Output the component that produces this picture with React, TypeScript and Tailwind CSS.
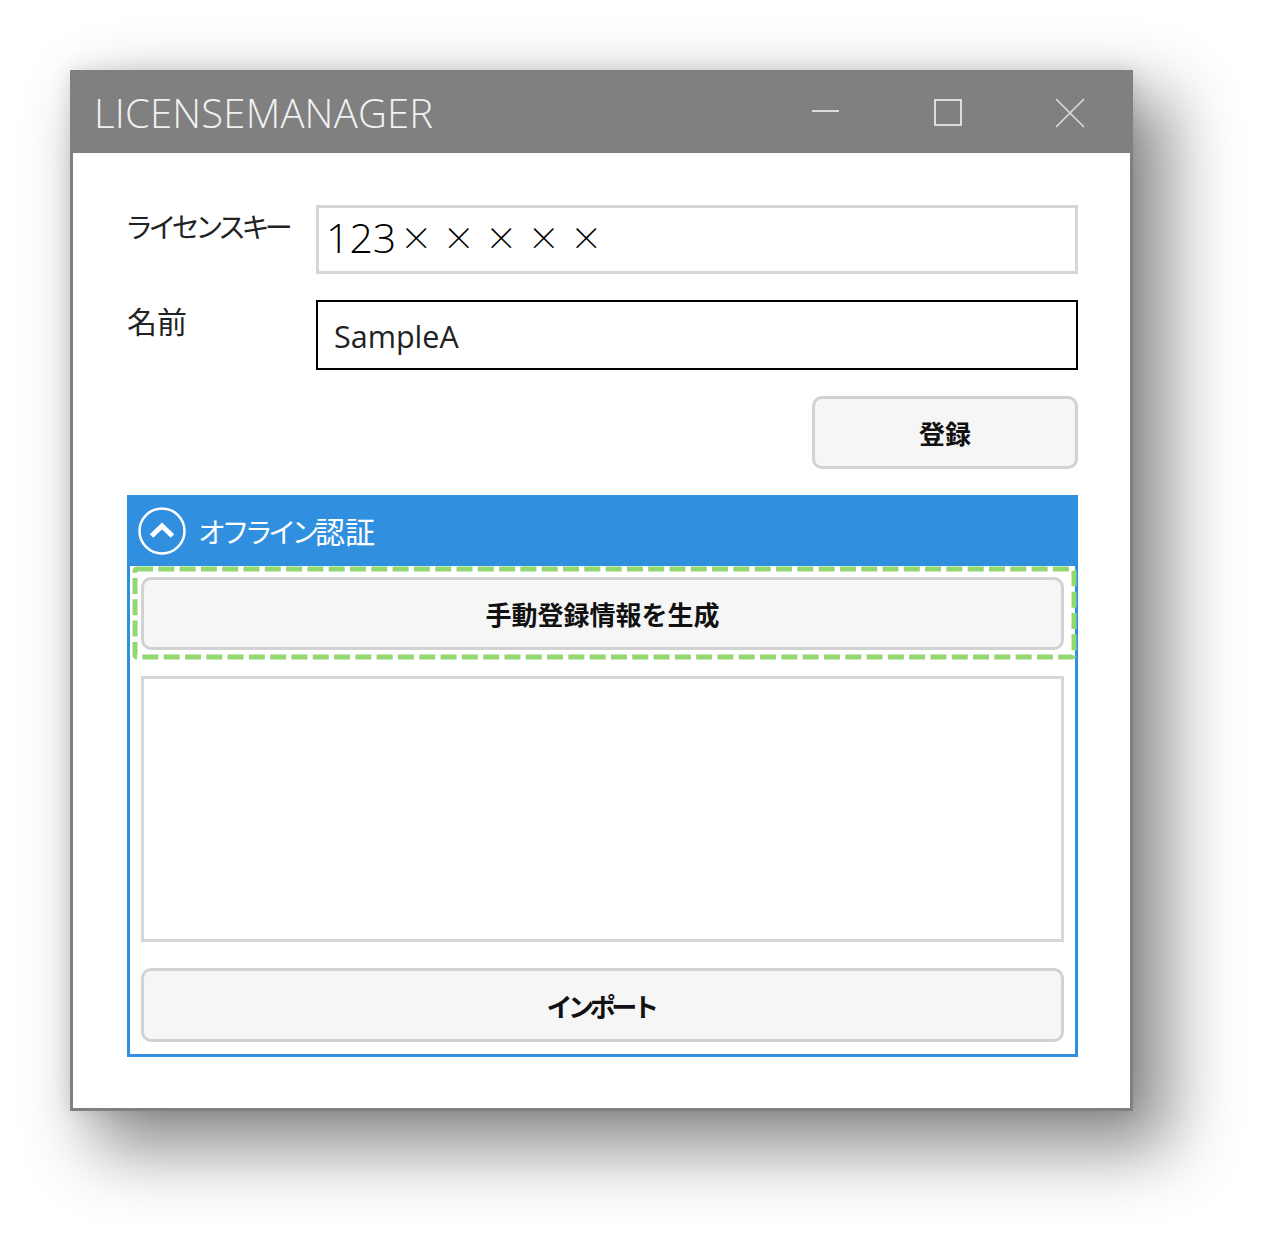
import React from "react";

const jp = "font-['Open_Sans','Noto_Sans_CJK_JP',sans-serif]";
const jpOnly = "font-['Noto_Sans_CJK_JP',sans-serif]";

const GrayButton = ({ children, className }: { children: React.ReactNode; className: string }) => (
  <button
    className={`flex items-center justify-center rounded-[10px] border-[3px] border-[#d2d2d2] bg-[#f6f6f6] text-[26px] font-bold text-[#111] ${jpOnly} ${className}`}
  >
    {children}
  </button>
);

const App = () => {
  return (
    <div className="h-[1254px] w-[1275px] overflow-hidden bg-white pl-[70px] pt-[70px]">
      <div className="flex h-[1041px] w-[1063px] flex-col border-x-[3px] border-b-[3px] border-[#808080] bg-white shadow-[30px_32px_65px_6px_rgba(0,0,0,0.46),0_0_20px_rgba(0,0,0,0.12)]">
        <div className="-mx-[3px] flex h-[83px] shrink-0 items-center bg-[#808080] pl-[24px] pt-[3px] text-[#f2f2f2]">
          <span className="font-['Open_Sans',sans-serif] text-[40px] font-light leading-none tracking-[0.2px]">
            LICENSEMANAGER
          </span>
          <div className="ml-auto flex items-center pr-[48px]">
            <svg width="28" height="30" viewBox="0 0 28 30" className="mr-[94px]">
              <path d="M0 13h27" stroke="#dcdcdc" strokeWidth="2" />
            </svg>
            <svg width="28" height="30" viewBox="0 0 28 30" className="mr-[93px]">
              <rect x="1" y="2" width="26" height="25" fill="none" stroke="#dcdcdc" strokeWidth="2" />
            </svg>
            <svg width="30" height="30" viewBox="0 0 30 30">
              <path d="M1 1l28 28M29 1L1 29" stroke="#dcdcdc" strokeWidth="1.6" />
            </svg>
          </div>
        </div>

        <div className="flex flex-col pl-[54px] pr-[52px] pt-[52px]">
          <div className="flex items-start">
            <span className={`-ml-[2px] mt-[1px] w-[191px] whitespace-nowrap text-[28px] leading-[40px] tracking-[-4.6px] text-[#222] ${jpOnly}`}>
              ライセンスキー
            </span>
            <div className={`flex h-[69px] flex-1 items-center border-[3px] border-[#d6d6d6] pb-[3px] pl-[7px] text-[41px] font-light text-black ${jp}`}>
              123
              <span className={`mb-[4px] ml-[4px] text-[32px] tracking-[10.5px] ${jpOnly}`}>×××××</span>
            </div>
          </div>

          <div className="mt-[26px] flex items-start">
            <span className={`w-[189px] text-[30px] leading-[40px] text-[#222] ${jpOnly}`}>名前</span>
            <div className={`flex h-[70px] flex-1 items-center border-2 border-black pl-[16px] pt-[3px] text-[30.5px] text-[#222] ${jp}`}>
              SampleA
            </div>
          </div>

          <div className="mt-[26px] flex justify-end">
            <GrayButton className="h-[73px] w-[266px]">登録</GrayButton>
          </div>

          <div className="relative mt-[26px] h-[562px] w-[951px] border-x-[3px] border-b-[3px] border-[#318fdf]">
            <div className="-mx-[3px] flex h-[71px] items-center bg-[#318fdf] pl-[10px]">
              <svg width="50" height="50" viewBox="0 0 50 50">
                <circle cx="25" cy="25" r="22.5" fill="none" stroke="#fff" strokeWidth="2.5" />
                <path d="M14.5 30l10.5-10 10.5 10" fill="none" stroke="#fff" strokeWidth="5" />
              </svg>
              <span className={`ml-[11px] text-[30px] text-white ${jpOnly}`}>
                <span className="text-[28px] tracking-[-4.6px]">オフライン</span>認証
              </span>
            </div>

            <div className="flex flex-col pl-[11px] pr-[11px] pt-[11px]">
              <GrayButton className="h-[73px] w-[923px]">手動登録情報を生成</GrayButton>
              <div className="mt-[26px] h-[266px] w-[923px] border-[3px] border-[#d6d6d6] bg-white" />
              <GrayButton className="mt-[26px] h-[74px] w-[923px] pr-[4px] text-[24px] tracking-[-4.4px]">インポート</GrayButton>
            </div>

            {/* annotation drawn over the button */}
            <svg width="945" height="94" viewBox="0 0 945 94" className="absolute left-[2px] top-[71px]">
              <rect
                x="3"
                y="3"
                width="939"
                height="88"
                rx="2"
                fill="none"
                stroke="#92d870"
                strokeWidth="5"
                strokeDasharray="16 5.3"
              />
            </svg>
          </div>
        </div>
      </div>
    </div>
  );
};

export default App;
